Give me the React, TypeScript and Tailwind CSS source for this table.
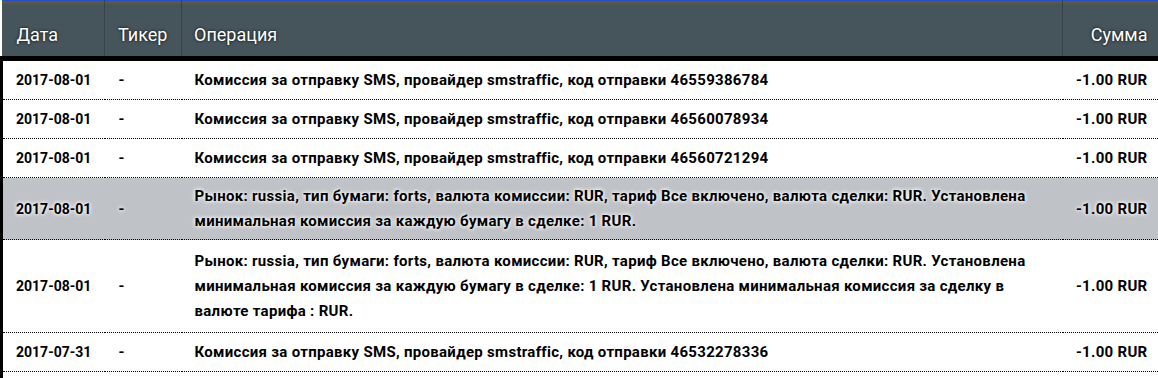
type Row = {
  date: string;
  ticker: string;
  op: string[];
  sum: string;
  highlight?: boolean;
  pad: string;
};

const ROWS: Row[] = [
  { date: '2017-08-01', ticker: '-', op: ['Комиссия за отправку SMS, провайдер smstraffic, код отправки 46559386784'], sum: '-1.00 RUR', pad: 'pt-[7px] pb-[6px]' },
  { date: '2017-08-01', ticker: '-', op: ['Комиссия за отправку SMS, провайдер smstraffic, код отправки 46560078934'], sum: '-1.00 RUR', pad: 'pt-[7px] pb-[6px]' },
  { date: '2017-08-01', ticker: '-', op: ['Комиссия за отправку SMS, провайдер smstraffic, код отправки 46560721294'], sum: '-1.00 RUR', pad: 'pt-[7px] pb-[6px]' },
  {
    date: '2017-08-01',
    ticker: '-',
    op: [
      'Рынок: russia, тип бумаги: forts, валюта комиссии: RUR, тариф Все включено, валюта сделки: RUR. Установлена',
      'минимальная комиссия за каждую бумагу в сделке: 1 RUR.',
    ],
    sum: '-1.00 RUR',
    highlight: true,
    pad: 'pt-[6px] pb-[5px]',
  },
  {
    date: '2017-08-01',
    ticker: '-',
    op: [
      'Рынок: russia, тип бумаги: forts, валюта комиссии: RUR, тариф Все включено, валюта сделки: RUR. Установлена',
      'минимальная комиссия за каждую бумагу в сделке: 1 RUR. Установлена минимальная комиссия за сделку в',
      'валюте тарифа : RUR.',
    ],
    sum: '-1.00 RUR',
    pad: 'pt-[9px] pb-[8px]',
  },
  { date: '2017-07-31', ticker: '-', op: ['Комиссия за отправку SMS, провайдер smstraffic, код отправки 46532278336'], sum: '-1.00 RUR', pad: 'pt-[7px] pb-[6px]' },
];

export default function App() {
  return (
    <div className="h-[378px] w-[1158px] overflow-hidden bg-white font-['Roboto','Liberation_Sans',sans-serif] text-black">
      <table className="w-[1158px] table-fixed border-collapse">
        <colgroup>
          <col className="w-[103px]" />
          <col className="w-[77px]" />
          <col className="w-[881px]" />
          <col className="w-[97px]" />
        </colgroup>
        <thead>
          <tr className="border-t border-[#2450d8] border-b-[5px] border-b-black bg-[#46555b] text-[18px] leading-[20px] text-white shadow-[inset_0_3px_3px_-1px_#6b5d2a] [text-shadow:0_0_3px_#000]">
            <th className="h-[58px] border-r border-[#37444a] pb-[11px] pl-[15px] text-left align-bottom font-normal">Дата</th>
            <th className="border-r border-[#37444a] pb-[11px] pl-[13px] text-left align-bottom font-normal">Тикер</th>
            <th className="border-r border-[#37444a] pb-[11px] pl-[12px] text-left align-bottom font-normal">Операция</th>
            <th className="pb-[11px] pr-[12px] text-right align-bottom font-normal">Сумма</th>
          </tr>
        </thead>
        <tbody className="text-[15px] font-bold leading-[25px] tracking-[0.3px]">
          {ROWS.map((r, i) => (
            <tr
              key={i}
              className={
                r.highlight
                  ? 'border-b border-dotted border-black bg-[#bfc2c6] [text-shadow:0_0_4px_#fff,0_0_4px_#fff]'
                  : 'border-b border-dotted border-black'
              }
            >
              <td className={`border-l-[3px] border-l-black pl-[13px] align-middle text-[14px] tracking-normal ${r.pad}`}>{r.date}</td>
              <td className={`pl-[14px] align-middle ${r.pad}`}>{r.ticker}</td>
              <td className={`pl-[13px] align-middle ${r.pad}`}>
                {r.op.map((line, j) => (
                  <div key={j} className="whitespace-nowrap">
                    {line}
                  </div>
                ))}
              </td>
              <td className={`pr-[12px] text-right align-middle ${r.pad}`}>{r.sum}</td>
            </tr>
          ))}
          <tr>
            <td className="h-[20px] border-l-[3px] border-l-black" />
            <td />
            <td />
            <td />
          </tr>
        </tbody>
      </table>
    </div>
  );
}
